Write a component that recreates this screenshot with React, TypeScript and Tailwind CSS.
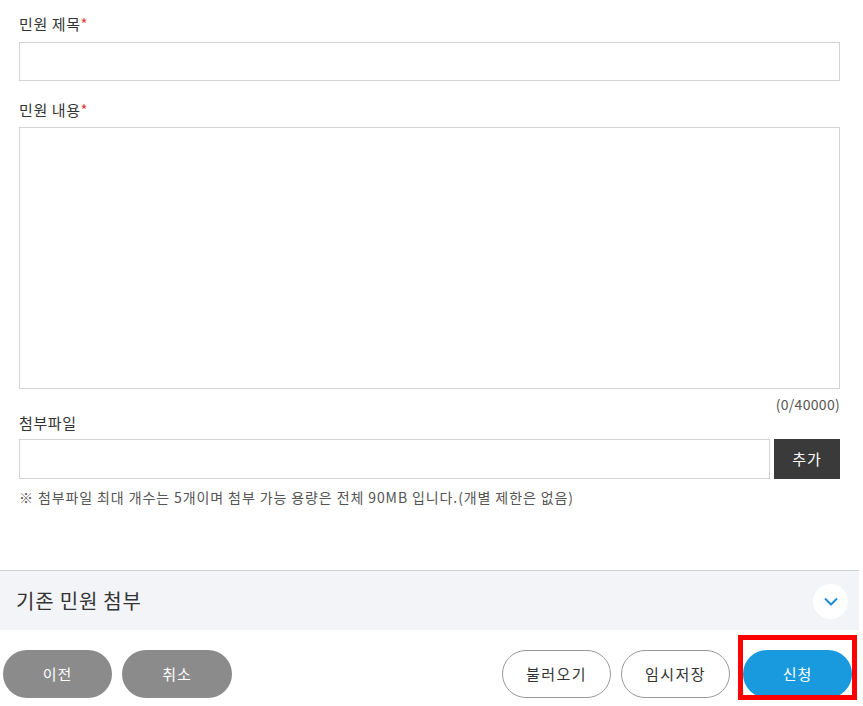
const FONT = { fontFamily: '"Malgun Gothic", "Noto Sans CJK KR", "Noto Sans", sans-serif' };

function Label({ text, required }: { text: string; required?: boolean }) {
  return (
    <p className="text-[15px] leading-[22px] tracking-[0.6px] text-[#333]">
      {text}
      {required && <span className="text-[#e43f3f]">*</span>}
    </p>
  );
}

export default function App() {
  return (
    <div className="w-[859px] bg-white" style={FONT}>
      {/* form */}
      <div className="px-[19px] pt-[13px]">
        <Label text="민원 제목" required />
        <input className="mt-[7px] block h-[39px] w-full border border-[#d3d3d3] bg-white outline-none" />

        <div className="mt-[18px]">
          <Label text="민원 내용" required />
        </div>
        <textarea className="mt-[6px] block h-[262px] w-full resize-none border border-[#d3d3d3] bg-white outline-none" />
        <p className="mt-[6px] text-right text-[14px] leading-[18px] tracking-[0.3px] text-[#555]">(0/40000)</p>

        <p className="text-[15px] leading-[20px] tracking-[0.6px] text-[#333]">첨부파일</p>
        <div className="mt-[6px] flex h-[40px] gap-[4px]">
          <div className="flex-1 border border-[#d3d3d3]" />
          <button className="w-[66px] bg-[#3a3a3a] text-[15px] tracking-[1px] text-white">추가</button>
        </div>
        <p className="mt-[9px] text-[14px] leading-[18px] tracking-[0.9px] text-[#555]">
          ※ 첨부파일 최대 개수는 5개이며 첨부 가능 용량은 전체 90MB 입니다.(개별 제한은 없음)
        </p>
      </div>

      {/* 기존 민원 첨부 */}
      <div className="mt-[64px] flex h-[60px] items-center justify-between border-t border-[#cfd2d8] bg-[#f3f4f8] pl-[16px] pr-[11px]">
        <span className="text-[20px] tracking-[0.8px] text-[#333]">기존 민원 첨부</span>
        <span className="mt-[2px] flex h-[35px] w-[35px] items-center justify-center rounded-full bg-white">
          <svg width="14" height="9" viewBox="0 0 14 9" fill="none">
            <path d="M1 1.5l6 6 6-6" stroke="#1b8ed6" strokeWidth="2" />
          </svg>
        </span>
      </div>

      {/* buttons */}
      <div className="flex items-center justify-between pb-[8px] pl-[3px] pr-[7px] pt-[20px]">
        <div className="flex gap-[10px]">
          <button className="h-[48px] w-[109px] rounded-full bg-[#8b8b8b] text-[15px] tracking-[1px] text-white">이전</button>
          <button className="h-[48px] w-[110px] rounded-full bg-[#8b8b8b] text-[15px] tracking-[1px] text-white">취소</button>
        </div>
        <div className="flex gap-[10px]">
          <button className="h-[48px] w-[109px] rounded-full border border-[#999] bg-white text-[15px] tracking-[1.5px] text-[#333]">불러오기</button>
          <button className="h-[48px] w-[109px] rounded-full border border-[#999] bg-white text-[15px] tracking-[1.5px] text-[#333]">임시저장</button>
          <div className="relative ml-[3px]">
            <button className="h-[48px] w-[109px] rounded-full bg-[#1a9ade] text-[15px] tracking-[1px] text-white">신청</button>
            <div className="pointer-events-none absolute left-[-5px] top-[-15px] h-[65px] w-[119px] border-[5px] border-[#ff0000]" />
          </div>
        </div>
      </div>
    </div>
  );
}
